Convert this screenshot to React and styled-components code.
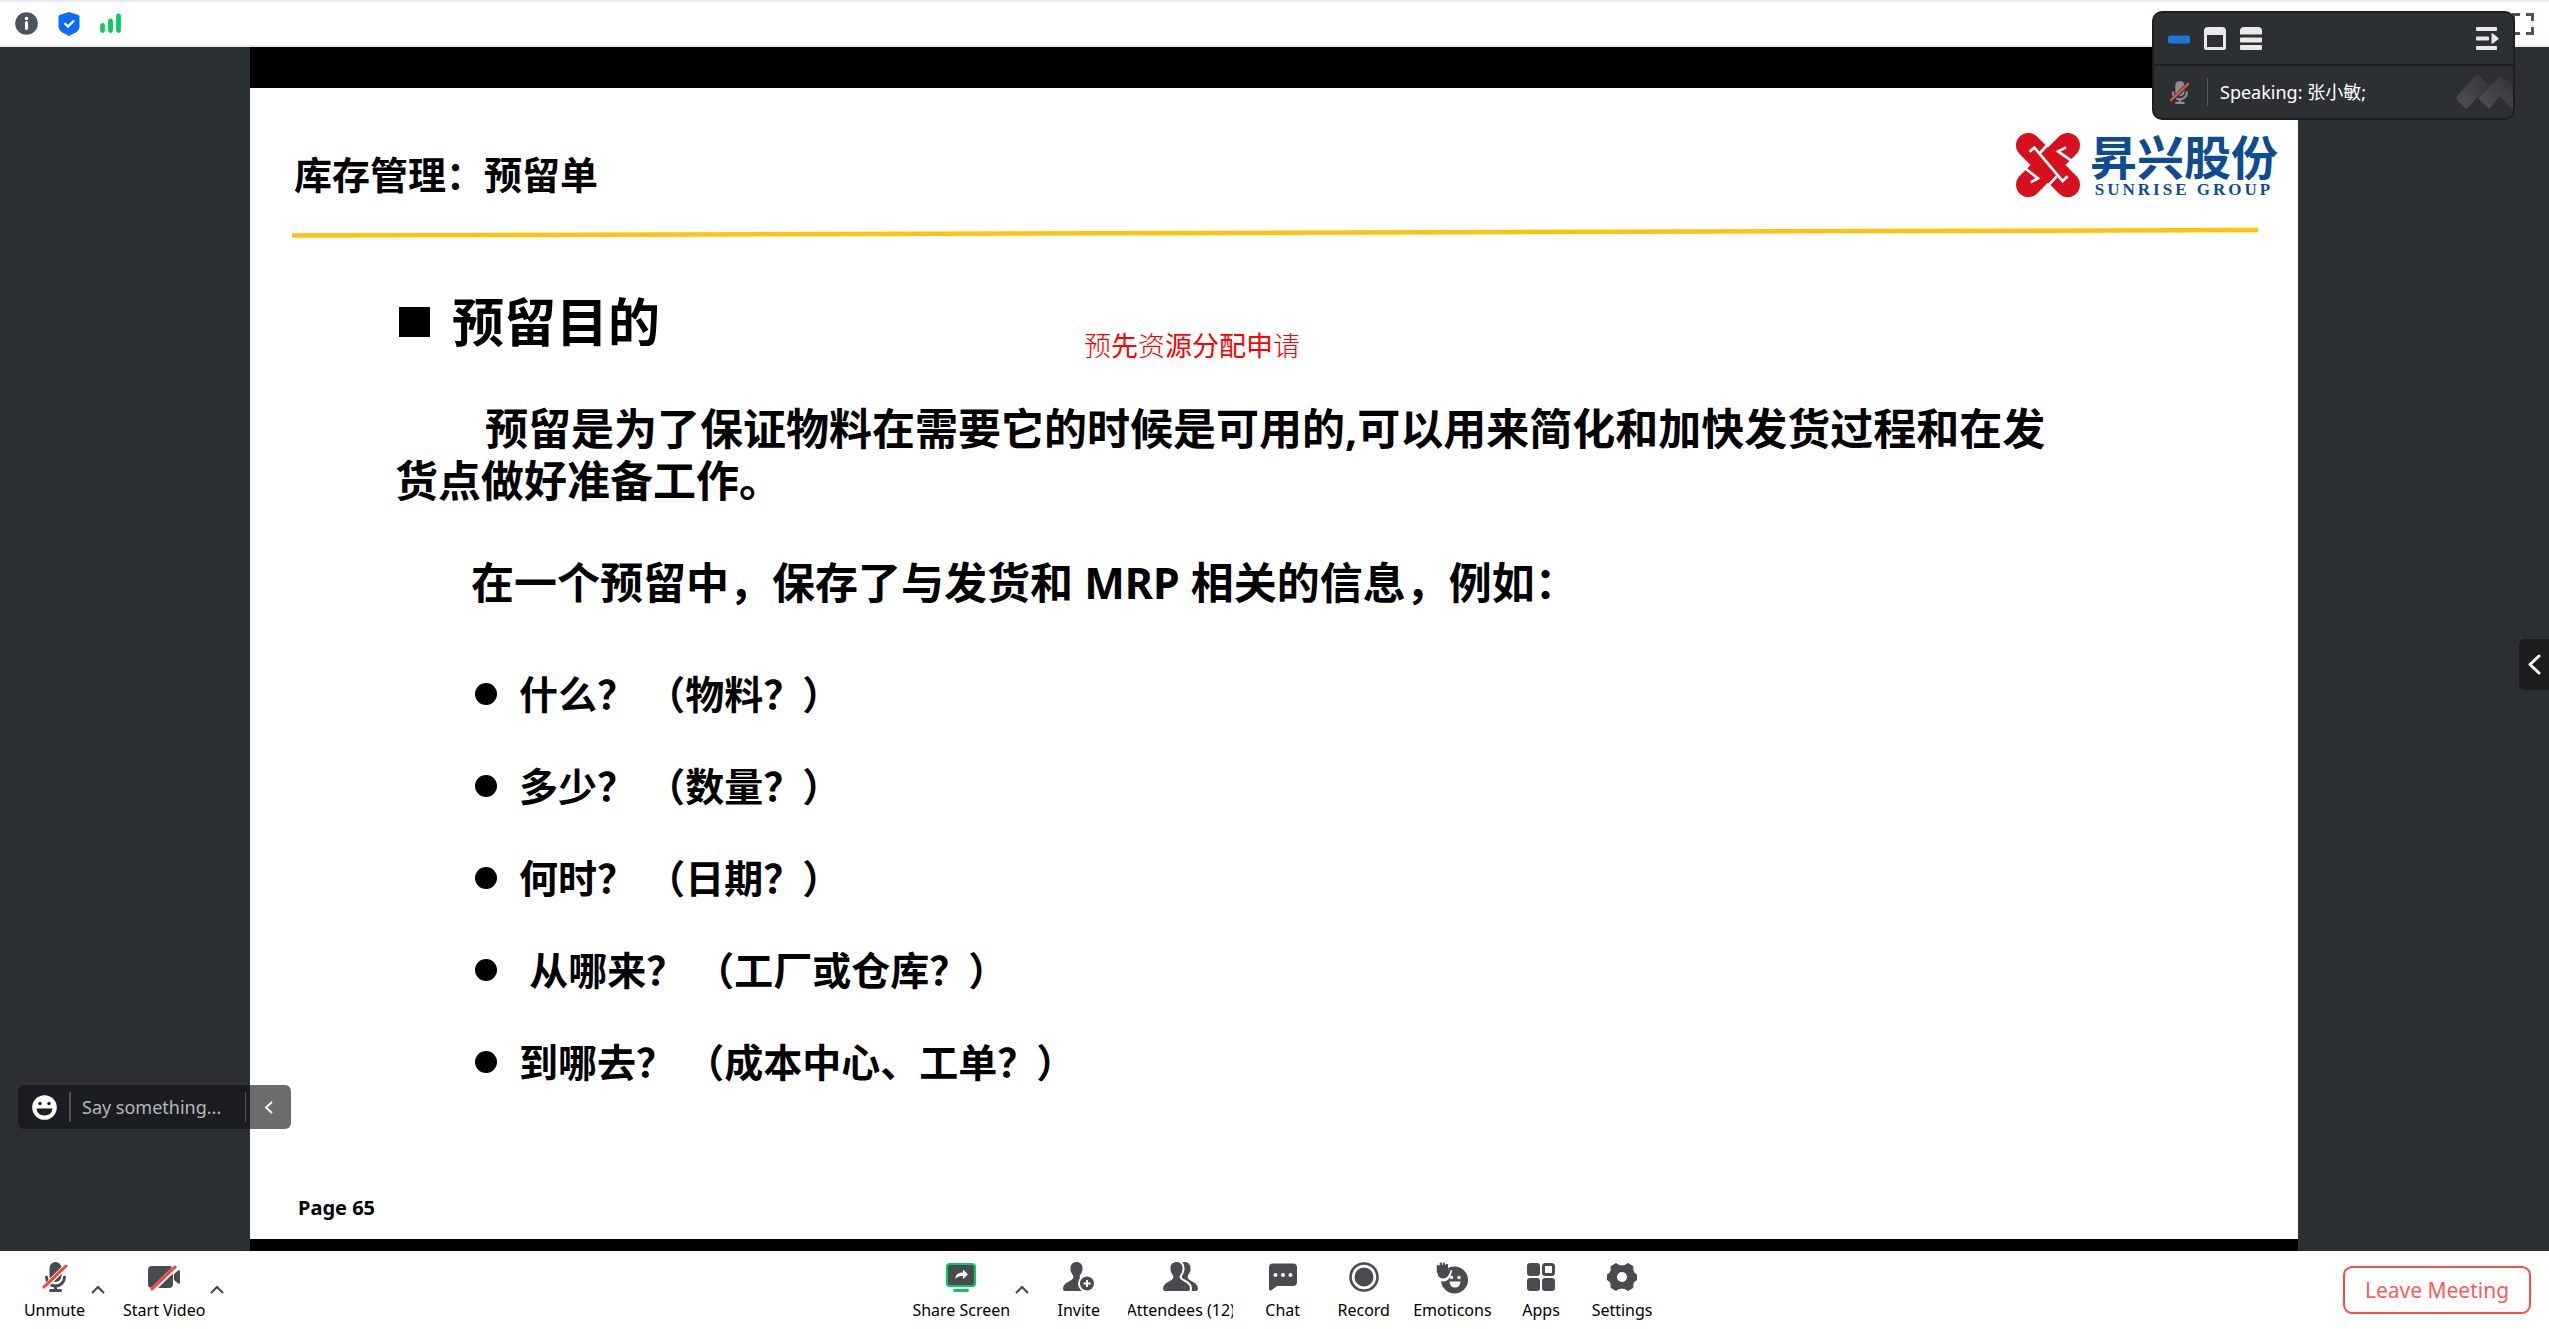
import React from "react";
import styled, { createGlobalStyle } from "styled-components";

const INK = "#4a4b4f";

const GlobalStyle = createGlobalStyle`
  *, *::before, *::after { box-sizing: border-box; }
  body {
    margin: 0;
    background: #fff;
    color: #000;
    font-family: "Noto Sans", "Noto Sans CJK SC", sans-serif;
  }
  h1, h2, p, ul { margin: 0; padding: 0; }
  button {
    margin: 0;
    padding: 0;
    border: 0;
    background: none;
    color: inherit;
    font: inherit;
    cursor: pointer;
  }
  svg { display: block; flex: none; }
`;

const Page = styled.div`
  display: flex;
  flex-direction: column;
  min-height: 100vh;
`;

const StatusBar = styled.header`
  display: flex;
  align-items: center;
  gap: 20px;
  height: 47px;
  padding: 0 15px;
  border-top: 2px solid #ebecf2;
  border-bottom: 2px solid #ebecf2;
`;

const FullScreenButton = styled.button`
  margin-left: auto;
`;

const Stage = styled.main`
  position: relative;
  flex: 1;
  display: flex;
  padding: 0 251px 0 250px;
  background: #2c3033;
`;

const Slide = styled.article`
  flex: 1;
  display: flex;
  flex-direction: column;
  border-top: 41px solid #000;
  border-bottom: 12px solid #000;
  background: #fff;
  font-weight: 700;
`;

const SlideHeader = styled.div`
  display: flex;
  align-items: flex-end;
  justify-content: space-between;
  padding: 44px 20px 0 44px;
`;

const SlideTitle = styled.h1`
  font-size: 38px;
  line-height: 48px;
`;

const Brand = styled.div`
  display: flex;
  align-items: center;
  gap: 10px;
  color: #0f4c8f;
`;

const BrandText = styled.div`
  display: flex;
  flex-direction: column;
  align-items: center;
`;

const BrandName = styled.span`
  font-size: 47px;
  line-height: 50px;
`;

const BrandLatin = styled.span`
  font-family: "Liberation Serif", serif;
  font-size: 17px;
  line-height: 16px;
  letter-spacing: 3px;
`;

const RuleLine = styled.svg`
  width: auto;
  height: 12px;
  margin: 29px 40px 0 42px;
`;

const SlideBody = styled.section`
  padding: 53px 228px 0 145px;
`;

const Heading = styled.h2`
  display: flex;
  align-items: center;
  gap: 22px;
  padding-left: 4px;
  font-size: 52px;
  line-height: 60px;

  &::before {
    content: "";
    width: 31px;
    height: 30px;
    background: #000;
  }
`;

const Paragraph = styled.p`
  margin-top: ${(p) => p.$top}px;
  text-indent: ${(p) => p.$indent}px;
  font-size: 43px;
  line-height: 52px;
`;

const Questions = styled.ul`
  margin-top: 39px;
  padding-left: 80px;
  list-style: none;
`;

const Question = styled.li`
  display: flex;
  align-items: center;
  gap: 22px;
  font-size: 39px;
  line-height: 92px;
  white-space: pre;

  &::before {
    content: "";
    width: 22px;
    height: 22px;
    border-radius: 50%;
    background: #000;
  }
`;

const PageNumber = styled.footer`
  margin-top: auto;
  padding: 0 48px 17px;
  font-size: 20px;
  line-height: 28px;
`;

const Annotation = styled.p`
  position: absolute;
  top: 279px;
  left: 1084px;
  color: #f00;
  font-size: 27px;
  line-height: 40px;
`;

const Thin = styled.span`
  font-weight: 300;
`;

const SpeakerPanel = styled.aside`
  position: absolute;
  top: -36px;
  right: 34px;
  width: 363px;
  border: 2px solid #1d1e20;
  border-radius: 10px;
  background: #2c3033;
  color: #fff;
  overflow: hidden;
`;

const PanelTools = styled.div`
  display: flex;
  align-items: center;
  gap: 14px;
  height: 53px;
  padding: 0 14px;
  border-bottom: 2px solid #1d1e20;

  > :last-child { margin-left: auto; }
`;

const PanelSpeaker = styled.div`
  display: flex;
  align-items: center;
  height: 52px;
  padding-left: 14px;
  font-size: 18px;
  line-height: 28px;
`;

const SpeakerName = styled.span`
  margin-left: 16px;
  padding-left: 12px;
  border-left: 1px solid #56585b;
`;

const PanelMark = styled.svg`
  margin-left: auto;
`;

const DrawerButton = styled.button`
  position: absolute;
  top: 592px;
  right: 0;
  display: grid;
  place-items: center;
  width: 30px;
  height: 51px;
  border-radius: 6px 0 0 6px;
  background: #1c1d1f;
`;

const ChatBar = styled.form`
  position: absolute;
  bottom: 122px;
  left: 18px;
  display: flex;
  align-items: center;
  width: 273px;
  height: 44px;
  padding-left: 14px;
  border-radius: 6px;
  background: rgba(18, 18, 21, 0.62);
`;

const ChatInput = styled.input`
  flex: 1;
  min-width: 0;
  height: 30px;
  margin-left: 12px;
  padding: 0 0 0 11px;
  border: 0;
  border-left: 2px solid #505155;
  border-right: 1px solid #505155;
  border-radius: 0;
  outline: 0;
  background: none;
  color: #fff;
  font-family: inherit;
  font-size: 18px;

  &::placeholder { color: #b3b7c3; opacity: 1; }
`;

const ChatToggle = styled.button`
  display: grid;
  place-items: center;
  width: 45px;
  height: 44px;
`;

const Toolbar = styled.nav`
  display: grid;
  grid-template-columns: 1fr auto 1fr;
  align-items: start;
  height: 78px;
  padding: 0 18px 0 23px;
  font-size: 16px;
`;

const ToolGroup = styled.div`
  display: flex;
  align-items: flex-start;
  gap: 18px;
  padding-left: ${(p) => p.$inset || 0}px;
`;

const ToolPair = styled.div`
  display: flex;
  align-items: flex-start;
  gap: 5px;
`;

const ToolButton = styled.button`
  display: flex;
  flex-direction: column;
  align-items: center;
  gap: 6px;
  width: ${(p) => (p.$width ? `${p.$width}px` : "auto")};
  min-width: 63px;
  padding-top: 11px;
  overflow: hidden;
  line-height: 24px;
  white-space: nowrap;
`;

const IconBox = styled.span`
  display: grid;
  place-items: center;
  height: 30px;
`;

const MoreButton = styled.button`
  padding-top: 34px;
`;

const LeaveButton = styled.button`
  justify-self: end;
  width: 188px;
  height: 48px;
  margin-top: 15px;
  border: 2px solid #ff4a46;
  border-radius: 9px;
  color: #ff5b58;
  font-size: 21px;
  line-height: 28px;
`;

const MicIcon = ({ size = 30, color = INK, slash = "#ff4038", halo = "#fff" }) => (
  <svg width={size} height={size} viewBox="0 0 30 30" fill="none">
    <rect x="9.500" y="0" width="12" height="20" rx="6" fill={color} />
    <path d="M6.500 15a9 9 0 0 0 18 0" stroke={color} strokeWidth="3" strokeLinecap="round" />
    <path d="M15.500 24v4M10.500 28.500h10" stroke={color} strokeWidth="3" strokeLinecap="round" />
    <path d="M4.500 25.500L26.500 3.500" stroke={halo} strokeWidth="5" />
    <path d="M4 25L26 4" stroke={slash} strokeWidth="3" strokeLinecap="round" />
  </svg>
);

const CameraIcon = () => (
  <svg width="32" height="30" viewBox="0 0 32 30" fill={INK}>
    <rect x="0" y="4" width="25" height="22" rx="4" />
    <path d="M26 12l4-3.500q2-1 2 1v11q0 2-2 1l-4-3.500z" />
    <path d="M5 27.500L28 5" stroke="#fff" strokeWidth="5" />
    <path d="M4 27L27 5" stroke="#ff4038" strokeWidth="3" strokeLinecap="round" />
  </svg>
);

const ShareIcon = () => (
  <svg width="30" height="30" viewBox="0 0 30 30">
    <rect x="1" y="2" width="28" height="22" rx="3" fill={INK} stroke="#0acb63" strokeWidth="2.200" />
    <path d="M9 17q1-7 8-6.500V7.500l5 5-5 4.500v-3q-5-.500-8 3z" fill="#fff" />
    <path d="M8.500 28.500h13" stroke="#0acb63" strokeWidth="2.800" strokeLinecap="round" />
  </svg>
);

const person = "M13.500 0c4 0 6.500 3 6 7.500-.300 3-1.500 4-2.500 6-.800 2 0 4 2.500 5l5 3q2.500 2 2.500 5.500 0 2-2 2H2q-2 0-2-2 0-3.500 2.500-5.500l5-3c2.500-1 3.300-3 2.500-5-1-2-2.200-3-2.500-6C7 3 9.500 0 13.500 0z";

const InviteIcon = () => (
  <svg width="32" height="30" viewBox="0 0 32 30" fill={INK}>
    <path d={person} />
    <circle cx="24" cy="21.500" r="9" fill="#fff" />
    <circle cx="24" cy="21.500" r="7" />
    <path d="M24 18v7M20.500 21.500h7" stroke="#fff" strokeWidth="2" />
  </svg>
);

const AttendeesIcon = () => (
  <svg width="35" height="30" viewBox="0 0 35 30" fill={INK}>
    <path d={person} transform="translate(8 0)" />
    <path d={person} stroke="#fff" strokeWidth="4" />
    <path d={person} />
  </svg>
);

const ChatIcon = () => (
  <svg width="28" height="30" viewBox="0 0 28 30" fill={INK}>
    <path d="M4 1.500h20a4 4 0 0 1 4 4V20a4 4 0 0 1-4 4H8l-6 4.500q-2 .500-2-1.500V5.500a4 4 0 0 1 4-4z" />
    <g fill="#fff">
      <circle cx="6.500" cy="13" r="2" />
      <circle cx="14" cy="13" r="2" />
      <circle cx="21.500" cy="13" r="2" />
    </g>
  </svg>
);

const RecordIcon = () => (
  <svg width="30" height="30" viewBox="0 0 30 30">
    <circle cx="15" cy="15" r="13.500" fill="none" stroke={INK} strokeWidth="2.600" />
    <circle cx="15" cy="15" r="9.500" fill={INK} />
  </svg>
);

const EmoticonsIcon = () => (
  <svg width="33" height="32" viewBox="0 0 33 32" fill={INK}>
    <circle cx="18.500" cy="18" r="13.500" />
    <path d="M1 5v6q0 7 6 7 5 0 7-7l1-3" fill="#fff" stroke="#fff" strokeWidth="3" />
    <path d="M1.500 3.500V10q0 6.500 5.500 6.500 4 0 6-4l2-4.500q-1-2-3 .500V2.500" />
    <path d="M1.800 10V4M4.800 10V1.500M7.800 10V1.500M10.800 10V3" stroke={INK} strokeWidth="2.200" strokeLinecap="round" />
    <g fill="#fff">
      <circle cx="15.500" cy="15.500" r="1.800" />
      <circle cx="23" cy="15.500" r="1.800" />
      <path d="M13.500 19.500h11q-.500 6-5.500 6t-5.500-6z" />
    </g>
  </svg>
);

const AppsIcon = () => (
  <svg width="28" height="30" viewBox="0 0 28 30" fill={INK}>
    <rect x="0" y="1" width="13" height="13" rx="3" />
    <rect x="0" y="16" width="13" height="13" rx="3" />
    <rect x="15" y="16" width="13" height="13" rx="3" />
    <rect x="16.500" y="2.500" width="10" height="10" rx="2" fill="none" stroke={INK} strokeWidth="3" />
  </svg>
);

const SettingsIcon = () => (
  <svg width="30" height="30" viewBox="0 0 30 30">
    <path
      d="M9 1.500q3 2.500 6 2.500t6-2.500l5 3q-.500 4 .500 5.500t3 2.500v5.500q-2 1-3 2.500t-.500 5l-5 3q-3-2.500-6-2.500t-6 2.500l-5-3q.500-3.500-.500-5T.500 18v-5.500q2-1 3-2.500T4 4.500z"
      fill={INK}
      stroke={INK}
      strokeWidth="1"
      strokeLinejoin="round"
    />
    <circle cx="15" cy="15" r="5" fill="#fff" />
  </svg>
);

const MoreIcon = () => (
  <svg width="14" height="9" viewBox="0 0 14 9" fill="none">
    <path d="M1 8l6-6 6 6" stroke={INK} strokeWidth="2.200" />
  </svg>
);

const InfoIcon = () => (
  <svg width="23" height="23" viewBox="0 0 23 23">
    <circle cx="11.500" cy="11.500" r="11.300" fill="#4e5361" />
    <circle cx="11.500" cy="6.500" r="1.800" fill="#fff" />
    <path d="M11.500 10.500v6" stroke="#fff" strokeWidth="3" strokeLinecap="round" />
  </svg>
);

const ShieldIcon = () => (
  <svg width="22" height="24" viewBox="0 0 22 24" fill="none">
    <path d="M11 0l9.500 3q1 .500 1 1.500V14q0 4-3.500 6.200L11 24l-7-3.800Q.500 18 .500 14V4.500q0-1 1-1.500z" fill="#0a6cff" />
    <path d="M6.500 11l3.500 3.500 6-6" stroke="#fff" strokeWidth="2.400" />
  </svg>
);

const SignalIcon = () => (
  <svg width="21" height="22" viewBox="0 0 21 22" fill="none" stroke="#0acb63" strokeWidth="4.800" strokeLinecap="round">
    <path d="M2.500 12.500v5M10.500 8v9.500M18.500 3v14.500" />
  </svg>
);

const FullScreenIcon = () => (
  <svg width="22" height="22" viewBox="0 0 22 22" fill="none" stroke="#4e5361" strokeWidth="3">
    <path d="M8 1.500H1.500V8M14 1.500h6.500V8M8 20.500H1.500V14M14 20.500h6.500V14" />
  </svg>
);

const BrandMark = () => (
  <svg width="64" height="64" viewBox="24 24 192 192">
    <g stroke="#d80f1c" strokeWidth="74" strokeLinecap="round">
      <path d="M61 61L179 179M179 61L61 179" />
    </g>
    <g fill="none" stroke="#fff" strokeWidth="8">
      <path d="M64 80L79 68 164 168 179 154" />
      <path d="M46 126L90 160 68 172" />
      <path d="M194 110L150 79 174 67" />
      <path d="M118 60L96 84M146 154L124 178" />
    </g>
  </svg>
);

const chatTools = [
  { label: "Invite", Icon: InviteIcon },
  { label: "Attendees (12)", Icon: AttendeesIcon, width: 105 },
  { label: "Chat", Icon: ChatIcon },
  { label: "Record", Icon: RecordIcon },
  { label: "Emoticons", Icon: EmoticonsIcon },
  { label: "Apps", Icon: AppsIcon },
  { label: "Settings", Icon: SettingsIcon },
];

const questions = [
  "什么？ （物料？）",
  "多少？ （数量？）",
  "何时？ （日期？）",
  " 从哪来？ （工厂或仓库？）",
  "到哪去？ （成本中心、工单？）",
];

const Tool = ({ label, Icon, width }) => (
  <ToolButton type="button" $width={width}>
    <IconBox><Icon /></IconBox>
    <span>{label}</span>
  </ToolButton>
);

const ToolWithMenu = ({ label, Icon }) => (
  <ToolPair>
    <Tool label={label} Icon={Icon} />
    <MoreButton type="button" aria-label={`${label} options`}><MoreIcon /></MoreButton>
  </ToolPair>
);

export default function App() {
  return (
    <Page>
      <GlobalStyle />
      <StatusBar>
        <InfoIcon />
        <ShieldIcon />
        <SignalIcon />
        <FullScreenButton type="button" aria-label="Full screen"><FullScreenIcon /></FullScreenButton>
      </StatusBar>

      <Stage>
        <Slide>
          <SlideHeader>
            <SlideTitle>库存管理：预留单</SlideTitle>
            <Brand>
              <BrandMark />
              <BrandText>
                <BrandName>昇兴股份</BrandName>
                <BrandLatin>SUNRISE GROUP</BrandLatin>
              </BrandText>
            </Brand>
          </SlideHeader>
          <RuleLine viewBox="0 0 1966 12" preserveAspectRatio="none">
            <path d="M0 8.500L1966 3" stroke="#ffc20e" strokeWidth="4.500" />
          </RuleLine>
          <SlideBody>
            <Heading>预留目的</Heading>
            <Paragraph $top={51} $indent={90}>
              预留是为了保证物料在需要它的时候是可用的,可以用来简化和加快发货过程和在发货点做好准备工作。
            </Paragraph>
            <Paragraph $top={50} $indent={76}>
              在一个预留中，保存了与发货和 MRP 相关的信息，例如：
            </Paragraph>
            <Questions>
              {questions.map((text) => <Question key={text}>{text}</Question>)}
            </Questions>
          </SlideBody>
          <PageNumber>Page 65</PageNumber>
        </Slide>

        <Annotation>
          <Thin>预</Thin>先<Thin>资</Thin>源分配申<Thin>请</Thin>
        </Annotation>

        <SpeakerPanel>
          <PanelTools>
            <button type="button" aria-label="Minimize">
              <svg width="22" height="24" viewBox="0 0 22 24">
                <rect x="0" y="8.500" width="22" height="8" rx="2" fill="#1d78d6" />
              </svg>
            </button>
            <button type="button" aria-label="Single view">
              <svg width="22" height="24" viewBox="0 0 22 24">
                <path fillRule="evenodd" d="M4 0h14q4 0 4 4v17q0 2-2 2H2q-2 0-2-2V4q0-4 4-4zM3 8v12h16V8z" fill="#e8eaea" />
              </svg>
            </button>
            <button type="button" aria-label="List view">
              <svg width="22" height="24" viewBox="0 0 22 24" fill="#e8eaea">
                <path d="M4 0h14q4 0 4 4v3.500H0V4q0-4 4-4z" />
                <rect x="0" y="10.500" width="22" height="5" rx="1" />
                <rect x="0" y="18" width="22" height="5" rx="1" />
              </svg>
            </button>
            <button type="button" aria-label="Collapse list">
              <svg width="23" height="24" viewBox="0 0 23 24" fill="#e8eaea">
                <rect x="0" y="0" width="21" height="4" rx="1" />
                <rect x="0" y="9.500" width="13" height="4" rx="1" />
                <rect x="0" y="19" width="21" height="4" rx="1" />
                <path d="M15.500 6.500q1-.500 2 .500l5 4q.500.500 0 1l-5 4q-1 1-2 .500z" />
              </svg>
            </button>
          </PanelTools>
          <PanelSpeaker>
            <MicIcon size={23} color="#8c8e90" slash="#e2574c" halo="#2c3033" />
            <SpeakerName>Speaking: 张小敏;</SpeakerName>
            <PanelMark width="57" height="36" viewBox="0 0 57 36">
              <defs>
                <linearGradient id="facet" x1="0" y1="1" x2="1" y2="0">
                  <stop offset="0" stopColor="#515256" />
                  <stop offset="1" stopColor="#303336" />
                </linearGradient>
              </defs>
              <path d="M1 22L21 0l12 12L10 35 1 26q-1-2 0-4z" fill="url(#facet)" />
              <path d="M21 0l12 12-11 11z" fill="#3b3d40" />
              <path d="M22 24L44 2l13 9v25L44 22 33 35z" fill="url(#facet)" />
            </PanelMark>
          </PanelSpeaker>
        </SpeakerPanel>

        <DrawerButton type="button" aria-label="Open side panel">
          <svg width="13" height="21" viewBox="0 0 13 21" fill="none">
            <path d="M11 2l-9 8.500 9 8.500" stroke="#fff" strokeWidth="3" strokeLinecap="round" strokeLinejoin="round" />
          </svg>
        </DrawerButton>

        <ChatBar onSubmit={(e) => e.preventDefault()}>
          <button type="button" aria-label="Emoji">
            <svg width="25" height="25" viewBox="0 0 25 25">
              <circle cx="12.500" cy="12.500" r="12.300" fill="#fff" />
              <circle cx="8" cy="8.500" r="1.700" fill="#1c1d20" />
              <circle cx="17" cy="8.500" r="1.700" fill="#1c1d20" />
              <path d="M4.500 13.500h16q-1 7-8 7t-8-7z" fill="#1c1d20" />
            </svg>
          </button>
          <ChatInput type="text" aria-label="Message" placeholder="Say something..." />
          <ChatToggle type="button" aria-label="Hide message box">
            <svg width="9" height="13" viewBox="0 0 9 13" fill="none">
              <path d="M8 1L2 6.500 8 12" stroke="#fff" strokeWidth="1.800" />
            </svg>
          </ChatToggle>
        </ChatBar>
      </Stage>

      <Toolbar>
        <ToolGroup>
          <ToolWithMenu label="Unmute" Icon={MicIcon} />
          <ToolWithMenu label="Start Video" Icon={CameraIcon} />
        </ToolGroup>
        <ToolGroup $inset={12}>
          <ToolWithMenu label="Share Screen" Icon={ShareIcon} />
          {chatTools.map((tool) => <Tool key={tool.label} {...tool} />)}
        </ToolGroup>
        <LeaveButton type="button">Leave Meeting</LeaveButton>
      </Toolbar>
    </Page>
  );
}
